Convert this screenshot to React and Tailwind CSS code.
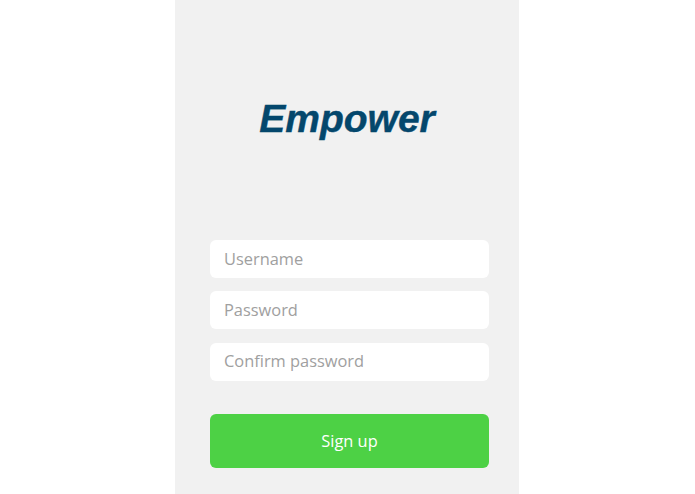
export default function App() {
  return (
    <div className="flex h-[494px] w-[695px] overflow-hidden bg-white font-['Open_Sans',sans-serif]">
      <div className="ml-[175px] flex h-full w-[344px] flex-col bg-[#f1f1f1] pl-[35px] pr-[30px]">
        <div className="mt-[94px] h-[50px] pr-[5px] text-center font-['Liberation_Sans',sans-serif] text-[39px] font-bold italic leading-[50px] text-[#04476c] [-webkit-text-stroke:0.4px_#04476c]">Empower</div>
        <div className="mt-[96px] flex flex-col gap-[13.25px]">
          <div className="flex h-[38px] items-center rounded-md bg-white px-[14px] text-[16.4px] text-[#a0a0a0]">Username</div>
          <div className="flex h-[38px] items-center rounded-md bg-white px-[14px] text-[16.4px] text-[#a0a0a0]">Password</div>
          <div className="flex h-[38px] items-center rounded-md bg-white px-[14px] text-[16.4px] text-[#a0a0a0]">Confirm password</div>
        </div>
        <div className="mt-[33.5px] flex h-[54px] items-center justify-center rounded-md bg-[#4dd145] text-[16.4px] text-white">Sign up</div>
      </div>
    </div>
  );
}
